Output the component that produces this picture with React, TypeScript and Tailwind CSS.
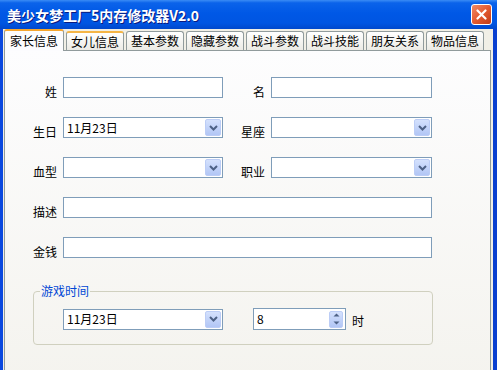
import React from 'react';

const tabs = ['家长信息', '女儿信息', '基本参数', '隐藏参数', '战斗参数', '战斗技能', '朋友关系', '物品信息'];

function DropButton() {
  return (
    <div className="mr-[1px] flex h-[17px] w-[16px] items-center justify-center rounded-[2px] border border-[#bccdf6] bg-gradient-to-b from-[#d4e1fd] to-[#b2c6f5]">
      <svg width="9" height="6" viewBox="0 0 9 6">
        <path d="M1 1 L4.5 4.5 L8 1" stroke="#4d6185" strokeWidth="2" fill="none" />
      </svg>
    </div>
  );
}

function Combo({ value, className }: { value?: string; className: string }) {
  return (
    <div className={`flex h-[21px] items-center justify-between border border-[#7f9db9] bg-white ${className}`}>
      <span className="pl-[3px] text-[12px] leading-none text-black">{value}</span>
      <DropButton />
    </div>
  );
}

function TextBox({ className }: { className: string }) {
  return <div className={`h-[21px] border border-[#7f9db9] bg-white ${className}`} />;
}

function Label({ text, className }: { text: string; className: string }) {
  return <div className={`pt-[8px] text-right text-[12px] leading-none text-black ${className}`}>{text}</div>;
}

export default function App() {
  return (
    <div className="h-[384px] w-[497px] overflow-hidden bg-white font-['Noto_Sans_CJK_SC','Noto_Sans',sans-serif]">
      <div className="flex h-[370px] flex-col overflow-hidden">
        {/* title bar */}
        <div className="flex h-[29px] shrink-0 items-center justify-between bg-[linear-gradient(to_bottom,#3b8cf5_0%,#0b63ea_10%,#0058e6_45%,#0055e2_80%,#0048cc_100%)]">
          <span className="pl-[7px] text-[14px] font-bold leading-none text-white [text-shadow:1px_1px_#0a1a80]">
            美少女梦工厂5内存修改器V2.0
          </span>
          <div className="mr-[5px] flex h-[21px] w-[21px] items-center justify-center rounded-[3px] border border-white bg-gradient-to-br from-[#f08a66] via-[#e35a30] to-[#c23b16]">
            <svg width="11" height="11" viewBox="0 0 11 11">
              <path d="M1.5 1.5 L9.5 9.5 M9.5 1.5 L1.5 9.5" stroke="white" strokeWidth="2.2" strokeLinecap="round" />
            </svg>
          </div>
        </div>

        {/* window body */}
        <div className="flex flex-1 flex-col border-l-[3px] border-r-[4px] border-l-[#0a48df] border-r-[#0a3fd0] bg-[#f1efe6]">
          {/* tabs */}
          <div className="flex h-[21px] shrink-0 items-end pl-[1px]">
            {tabs.map((t, i) =>
              i === 0 ? (
                <div
                  key={t}
                  className="relative z-10 -mb-[1px] flex h-[22px] w-[60px] items-center justify-center rounded-t-[3px] border-x border-t-2 border-x-[#919b9c] border-t-[#f5a62f] bg-[#fcfcfe] text-[12px] leading-none text-black"
                >
                  {t}
                </div>
              ) : (
                <div
                  key={t}
                  className={`ml-[2px] flex h-[19px] w-[58px] items-center justify-center rounded-t-[3px] border-x border-t border-x-[#919b9c] bg-gradient-to-b from-[#ffffff] to-[#ecebe5] text-[12px] leading-none text-black ${
                    i === 1 ? 'border-t-2 border-t-[#f5b545]' : 'border-t-[#919b9c]'
                  }`}
                >
                  {t}
                </div>
              )
            )}
          </div>

          {/* tab page */}
          <div className="ml-[1px] mr-[2px] h-[340px] shrink-0 border border-[#919b9c] bg-gradient-to-b from-[#fdfdfe] to-[#f4f3ee] pt-[26px]">
            <div className="flex flex-col gap-[19px]">
              <div className="flex items-center">
                <Label text="姓" className="w-[52px]" />
                <TextBox className="ml-[6px] w-[160px]" />
                <Label text="名" className="w-[42px]" />
                <TextBox className="ml-[6px] w-[161px]" />
              </div>
              <div className="flex items-center">
                <Label text="生日" className="w-[52px]" />
                <Combo value="11月23日" className="ml-[6px] w-[160px]" />
                <Label text="星座" className="w-[42px]" />
                <Combo className="ml-[6px] w-[161px]" />
              </div>
              <div className="flex items-center">
                <Label text="血型" className="w-[52px]" />
                <Combo className="ml-[6px] w-[160px]" />
                <Label text="职业" className="w-[42px]" />
                <Combo className="ml-[6px] w-[161px]" />
              </div>
              <div className="flex items-center">
                <Label text="描述" className="w-[52px]" />
                <TextBox className="ml-[6px] w-[369px]" />
              </div>
              <div className="flex items-center">
                <Label text="金钱" className="w-[52px]" />
                <TextBox className="ml-[6px] w-[369px]" />
              </div>
            </div>

            {/* group box */}
            <fieldset className="ml-[28px] mt-[25px] w-[400px] rounded-[4px] border border-[#d0d0bf] pb-[14px]">
              <legend className="ml-[6px] px-[1px] text-[12px] leading-[16px] text-[#0046d5]">游戏时间</legend>
              <div className="flex items-center pl-[29px] pt-[9px]">
                <Combo value="11月23日" className="w-[160px]" />
                <div className="ml-[30px] flex h-[22px] w-[93px] items-center justify-between border border-[#7f9db9] bg-white">
                  <span className="pl-[3px] text-[12px] leading-none text-black">8</span>
                  <div className="mr-[2px] flex h-[17px] w-[14px] flex-col rounded-[2px] border border-[#bccdf6] bg-gradient-to-b from-[#d4e1fd] to-[#b2c6f5]">
                    <div className="flex flex-1 items-center justify-center">
                      <svg width="7" height="4" viewBox="0 0 7 4">
                        <path d="M0.5 3.5 L3.5 0.5 L6.5 3.5 Z" fill="#4d6185" />
                      </svg>
                    </div>
                    <div className="flex flex-1 items-center justify-center">
                      <svg width="7" height="4" viewBox="0 0 7 4">
                        <path d="M0.5 0.5 L3.5 3.5 L6.5 0.5 Z" fill="#4d6185" />
                      </svg>
                    </div>
                  </div>
                </div>
                <span className="ml-[6px] pt-[4px] text-[12px] leading-none text-black">时</span>
              </div>
            </fieldset>
          </div>
        </div>
      </div>
    </div>
  );
}
